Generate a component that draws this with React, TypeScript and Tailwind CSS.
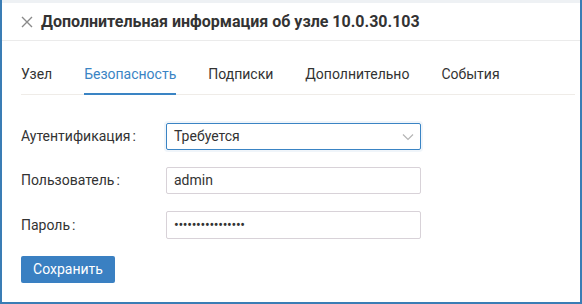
import React from "react";

const tabs = ["Узел", "Безопасность", "Подписки", "Дополнительно", "События"];

function Field({ label, children }: { label: string; children: React.ReactNode }) {
  return (
    <div className="flex items-center">
      <div className="w-[145px] text-[14px] text-[#333]">
        {label}
        <span className="ml-[2px]">:</span>
      </div>
      {children}
    </div>
  );
}

export default function App() {
  return (
    <div
      className="w-[582px] h-[304px] bg-white border-l-2 border-r-2 border-b-2 border-[#3a7db5] flex flex-col"
      style={{ fontFamily: "Roboto, 'Noto Sans', sans-serif" }}
    >
      <div className="h-[3px] bg-[#eef1f4]" />
      {/* header */}
      <div className="h-[38px] flex items-center pl-[19px] border-b border-[#ebebeb]">
        <svg width="12" height="12" viewBox="0 0 12 12" className="shrink-0">
          <path d="M1 1L11 11M11 1L1 11" stroke="#8a8a8a" strokeWidth="1.4" />
        </svg>
        <div className="ml-[8px] text-[16px] font-bold text-[#333] leading-none">
          Дополнительная информация об узле 10.0.30.103
        </div>
      </div>

      {/* tabs */}
      <div className="ml-[19px] mr-[5px] mt-[23px] flex border-b border-[#efece8]">
        {tabs.map((t, i) => (
          <div
            key={t}
            className={
              i === 1
                ? "mr-[32px] pb-[7px] text-[14px] text-[#3a84c4] border-b-2 border-[#3a84c4] -mb-px"
                : "mr-[32px] pb-[9px] text-[14px] text-[#333]"
            }
          >
            {t}
          </div>
        ))}
      </div>

      {/* form */}
      <div className="pl-[19px] pt-[28px] flex flex-col gap-[17px]">
        <Field label="Аутентификация">
          <div className="w-[255px] h-[27px] border border-[#3a84c4] rounded-[2px] shadow-[0_0_0_2px_rgba(58,132,196,0.08)] flex items-center pl-[7px] pr-[6px] text-[14px] text-[#333]">
            <span className="flex-1">Требуется</span>
            <svg width="12" height="8" viewBox="0 0 12 8">
              <path d="M1 1.5L6 6.5L11 1.5" stroke="#b5b5b5" strokeWidth="1.2" fill="none" />
            </svg>
          </div>
        </Field>
        <Field label="Пользователь">
          <div className="w-[255px] h-[27px] border border-[#d8d2d8] rounded-[2px] flex items-center pl-[7px] text-[14px] text-[#333]">
            admin
          </div>
        </Field>
        <Field label="Пароль">
          <div className="w-[255px] h-[28px] border border-[#d8d2d8] rounded-[2px] flex items-center pl-[7px] text-[14px] text-[#333] tracking-[-0.3px]">
            ••••••••••••••••
          </div>
        </Field>
        <div>
          <button className="w-[94px] h-[27px] bg-[#3a80c2] text-white text-[14px] rounded-[2px]">
            Сохранить
          </button>
        </div>
      </div>
    </div>
  );
}
